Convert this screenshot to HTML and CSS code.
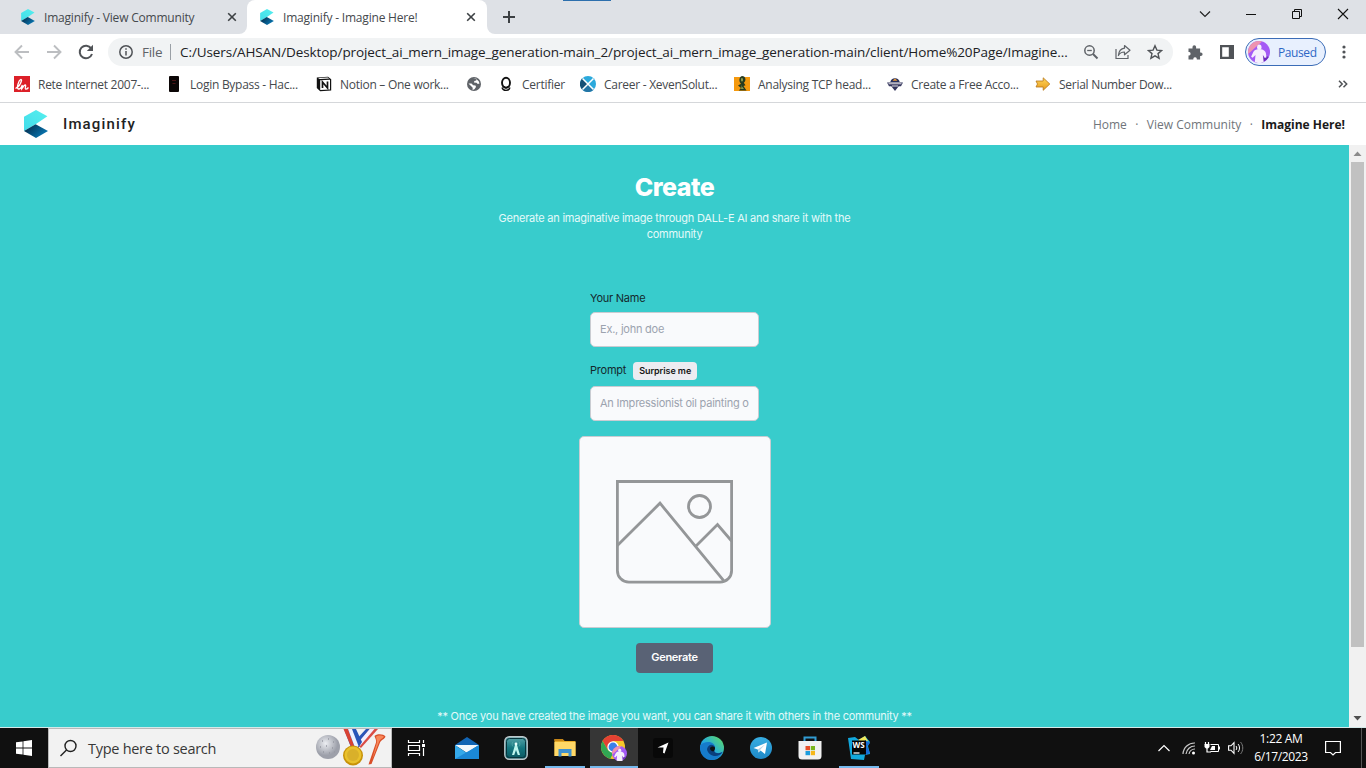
FILE: index.html
```html
<!DOCTYPE html>
<html lang="en">
<head>
<meta charset="utf-8">
<title>Imaginify - Imagine Here!</title>
<link rel="stylesheet" href="styles.css">
</head>
<body>
<svg class="defs" width="0" height="0" aria-hidden="true">
  <defs>
    <linearGradient id="navy" x1="0" y1="0" x2="1" y2="0.6"><stop offset="0" stop-color="#04243f"/><stop offset="1" stop-color="#0878b4"/></linearGradient>
    <linearGradient id="aqua" x1="0" y1="1" x2="1" y2="0"><stop offset="0" stop-color="#42dcea"/><stop offset="1" stop-color="#55efee"/></linearGradient>
    <linearGradient id="gold" x1="0" y1="0" x2="0" y2="1"><stop offset="0" stop-color="#ffd75a"/><stop offset="1" stop-color="#e89a1c"/></linearGradient>
    <linearGradient id="edge" x1="0" y1="1" x2="1" y2="0"><stop offset="0" stop-color="#0c62bd"/><stop offset=".45" stop-color="#23a9e0"/><stop offset="1" stop-color="#63e05c"/></linearGradient>
    <linearGradient id="tele" x1="0" y1="0" x2="0" y2="1"><stop offset="0" stop-color="#37aee2"/><stop offset="1" stop-color="#1e88c7"/></linearGradient>
    <linearGradient id="teal" x1="0" y1="0" x2="0" y2="1"><stop offset="0" stop-color="#5aa5aa"/><stop offset=".5" stop-color="#14767f"/><stop offset="1" stop-color="#0a555f"/></linearGradient>
    <radialGradient id="ball" cx=".4" cy=".35"><stop offset="0" stop-color="#eceef2"/><stop offset="1" stop-color="#9da0aa"/></radialGradient>
    <symbol id="logo" viewBox="0 0 24 28"><path fill="url(#aqua)" d="M12 0l11.4 6.2L12 14 0 21V6.8z"/><path fill="url(#navy)" d="M0 21l11.600-6.800L24 21l-12 7z"/></symbol>
    <symbol id="close" viewBox="0 0 10 10"><path d="M1.200 1.200l7.600 7.600M8.800 1.200L1.200 8.800" stroke="#3c4043" stroke-width="1.600"/></symbol>
    <symbol id="avatar" viewBox="0 0 22 22"><circle cx="11" cy="11" r="11" fill="#a45af5"/><path fill="#ee93b0" d="M11 0A11 11 0 0 0 .2 13L14 .4A11 11 0 0 0 11 0z"/><path fill="#6d2cba" d="M14.500 21.400A11 11 0 0 0 20.800 16l-5.300-2z"/><ellipse cx="11.300" cy="6.200" rx="2.200" ry="2.700" fill="#f7f0fd"/><path fill="#f5effd" d="M9.500 8.200h3.700c2.600.6 4.300 2 4.700 4l.6 4.100-1.700.7-2-3.200.9 7.300a11 11 0 0 1-8.900 0l.7-7-2.900 2.600-1.500-1 2-4.200c.8-1.900 2.200-2.900 4.400-3.300z"/></symbol>
  </defs>
</svg>

<div class="screen">
  <div class="tabstrip">
    <div class="tab tab-idle">
      <svg class="fav"><use href="#logo"/></svg><span class="tab-title">Imaginify - View Community</span><svg class="tab-x"><use href="#close"/></svg>
    </div>
    <div class="tab-slot">
      <div class="tab tab-active">
        <svg class="fav"><use href="#logo"/></svg><span class="tab-title">Imaginify - Imagine Here!</span><svg class="tab-x"><use href="#close"/></svg>
      </div>
    </div>
    <div class="strip-rest">
      <svg class="newtab" viewBox="0 0 12 12"><path d="M6 0v12M0 6h12" stroke="#3c4043" stroke-width="2"/></svg>
      <div class="loadmark"></div>
      <div class="window-buttons">
        <svg viewBox="0 0 12 12"><path d="M1 3.500l5 5 5-5" fill="none" stroke="#222" stroke-width="1.200"/></svg>
        <svg viewBox="0 0 12 12"><path d="M1 6.500h10" stroke="#111"/></svg>
        <svg viewBox="0 0 12 12"><path d="M1.500 3.500h7v7h-7zM3.500 3.500v-2h7v7h-2" fill="none" stroke="#111"/></svg>
        <svg viewBox="0 0 12 12"><path d="M1 1l10 10M11 1L1 11" stroke="#111" stroke-width="1.100"/></svg>
      </div>
    </div>
  </div>

  <div class="toolbar">
    <div class="nav-buttons">
      <svg viewBox="0 0 16 16"><path d="M15 8H2M8 1.500L1.500 8 8 14.500" fill="none" stroke="#bcbec1" stroke-width="1.900"/></svg>
      <svg viewBox="0 0 16 16"><path d="M1 8h13M8 1.500L14.500 8 8 14.500" fill="none" stroke="#bcbec1" stroke-width="1.900"/></svg>
      <svg viewBox="0 0 16 16"><path d="M13.200 4.300A6.300 6.300 0 1 0 14 10" fill="none" stroke="#505357" stroke-width="2"/><path d="M15 .8V7H8.800z" fill="#505357"/></svg>
    </div>
    <div class="omnibox">
      <svg class="info" viewBox="0 0 14 14"><circle cx="7" cy="7" r="6.200" fill="none" stroke="#505357" stroke-width="1.500"/><path d="M7 6v4.500M7 3.300v1.500" stroke="#505357" stroke-width="1.500"/></svg>
      <span class="scheme">File</span><span class="bar"></span>
      <span class="url">C:/Users/AHSAN/Desktop/project_ai_mern_image_generation-main_2/project_ai_mern_image_generation-main/client/Home%20Page/Imagine...</span>
      <div class="omni-icons">
        <svg viewBox="0 0 16 16"><circle cx="6.500" cy="6.500" r="4.700" fill="none" stroke="#5f6368" stroke-width="1.500"/><path d="M10 10l4.500 4.500" stroke="#5f6368" stroke-width="1.900"/><path d="M4.200 6.500h4.600" stroke="#5f6368" stroke-width="1.300"/></svg>
        <svg viewBox="0 0 16 16"><path d="M1 5v9.500h12V11" fill="none" stroke="#5f6368" stroke-width="1.200"/><path d="M9.500 1.500L15 6.200l-5.500 4.600V8C6.500 8 4.600 9.200 3.400 11.500 3.800 7.500 5.700 4.700 9.500 4.200z" fill="none" stroke="#5f6368" stroke-width="1.200" stroke-linejoin="round"/></svg>
        <svg viewBox="0 0 16 16"><path d="M8 1.800l1.900 4.300 4.700.4L11 9.600l1.100 4.600L8 11.800l-4.100 2.400L5 9.600 1.400 6.500l4.700-.4z" fill="none" stroke="#505357" stroke-width="1.400"/></svg>
      </div>
    </div>
    <svg class="ext" viewBox="0 0 16 16"><path fill="#5f6368" d="M1.500 4.500h4V3a1.800 1.800 0 0 1 3.600 0v1.500h4v4h.7a1.800 1.800 0 0 1 0 3.600h-.7v3.400H9.800v-.8a1.800 1.800 0 0 0-3.500 0v.8H1.500v-3.900h.7a1.800 1.800 0 0 0 0-3.500h-.7z"/></svg>
    <svg class="side" viewBox="0 0 14 14"><path fill="#505357" fill-rule="evenodd" d="M0 0h14v14H0zM2.200 2.200v9.600h6.600V2.200z"/></svg>
    <div class="profile"><svg><use href="#avatar"/></svg><span>Paused</span></div>
    <svg class="kebab" viewBox="0 0 4 14"><g fill="#505357"><circle cx="2" cy="2" r="1.600"/><circle cx="2" cy="7" r="1.600"/><circle cx="2" cy="12" r="1.600"/></g></svg>
  </div>

  <div class="bookmarks">
    <div class="bm"><svg viewBox="0 0 16 16"><path fill="#dc2028" d="M0 0h16v16H0z"/><path d="M1.500 12.500C5 10.500 7 7 7.500 4.500c.2-1.700-1.600-1-2.300.5C3.700 8.500 2.500 12.500 4.500 13c1.800.2 3-1.700 3.800-4-.1 1.500-.8 3-.6 4C9 10.800 10 9 11.300 9c1.200.3-.8 3.200.2 4 .8.400 2-.4 3-1.500" fill="none" stroke="#fff" stroke-width="1.300"/></svg><span>Rete Internet 2007-...</span></div>
    <div class="bm"><svg viewBox="0 0 16 16"><rect x="3" width="10" height="16" rx="1" fill="#0b0606"/><path d="M6 4.500h4M6.500 7.500h3" stroke="#4d1416" stroke-width="1.200"/></svg><span>Login Bypass - Hac...</span></div>
    <div class="bm"><svg viewBox="0 0 16 16"><path d="M.8 1.400L12 .7l3.200 2.500v11.300l-11 .8L.8 12z" fill="#111"/><path fill="#fff" d="M4.200 4.300l9.800-.6v9.700l-9.800.6zM2 1.900l9.600-.5 1.600 1.200-9.400.5z"/><path d="M6.500 12V6l5 6V5.600" fill="none" stroke="#111" stroke-width="1.700"/></svg><span>Notion – One work...</span></div>
    <div class="bm"><svg viewBox="0 0 16 16"><circle cx="8" cy="8" r="7" fill="#5f6368"/><path fill="#fff" d="M2.500 7.500l3 .1 1.700 1.600 2.300.2.500 1.500-1.600 2.400-1.800.7.100-2.300L5 10zM7 2.300l3.500.4-.2 1.800-2 .6-.3 1.500 2.500.2 1.300 1.200 1.700-.4-.8-2.400-2.200-2z"/></svg></div>
    <div class="bm"><svg viewBox="0 0 16 16"><ellipse cx="8" cy="6.800" rx="4" ry="5" fill="none" stroke="#111" stroke-width="1.900"/><path d="M4 11.500c1 3.800 7 3.800 8 0M6 10.500l2 1.500 2-1.500" fill="none" stroke="#111" stroke-width="1.300"/></svg><span>Certifier</span></div>
    <div class="bm"><svg viewBox="0 0 16 16"><circle cx="8" cy="8" r="8" fill="#2ba9dc"/><path d="M8 8L2.300 2.300a8 8 0 0 0 0 11.400z" fill="#164f75"/><path d="M8 8l-5.700 5.700a8 8 0 0 0 11.400 0z" fill="#2475a5"/><path d="M2.500 2.500l11 11M13.500 2.500l-11 11" stroke="#fff" stroke-width="1.500"/></svg><span>Career - XevenSolut...</span></div>
    <div class="bm"><svg viewBox="0 0 16 16"><path fill="#f5990d" d="M0 1h16v14H0z"/><path d="M8 0c4 0 4.500 5 1.800 6.700l1.700 2.600-2 .7 3 4.500H4.800L7 12 4 9.500l3-1.800C4.500 5.500 5 1 8 0z" fill="#263b20"/><path d="M7.500 2c1.500-.5 2.500 2.500.5 3.700C6.800 5 6.500 3 7.500 2zM8 8.500v2l2 2.500H7z" fill="#8a9a52"/></svg><span>Analysing TCP head...</span></div>
    <div class="bm"><svg viewBox="0 0 16 16"><path d="M0 6.500h16l-2 3.800h-2.300L8 15l-3.700-4.700H2z" fill="#34365d"/><path d="M3.300 6a4.800 4.800 0 0 1 9.400 0z" fill="#27305e"/><path d="M5.500 4.800L8 2.600l2.500 2.200z" fill="#ee9b35"/><path d="M1.500 7.700h13M5 10h6" stroke="#dddce4" stroke-width="1.100"/></svg><span>Create a Free Acco...</span></div>
    <div class="bm"><svg viewBox="0 0 16 16"><path d="M1 5h7.200V1.800L14.800 8l-6.600 6.300V11H1l1.500-3z" fill="url(#gold)" stroke="#b57516" stroke-width=".8"/></svg><span>Serial Number Dow...</span></div>
    <svg class="more" viewBox="0 0 10 8"><path d="M1 .8L4.200 4 1 7.200M5.500.8L8.700 4 5.500 7.200" fill="none" stroke="#505357" stroke-width="1.500"/></svg>
  </div>

  <header class="site-header">
    <svg class="site-logo"><use href="#logo"/></svg>
    <span class="brand">Imaginify</span>
    <nav><a>Home</a><i>·</i><a>View Community</a><i>·</i><a class="current">Imagine Here!</a></nav>
  </header>

  <div class="viewport">
    <main class="page">
      <h1>Create</h1>
      <p class="lead">Generate an imaginative image through DALL-E AI and share it with the community</p>
      <form class="form">
        <label class="label-name">Your Name</label>
        <input type="text" placeholder="Ex., john doe">
        <div class="prompt-row"><label>Prompt</label><button type="button" class="surprise">Surprise me</button></div>
        <input type="text" placeholder="An Impressionist oil painting o">
      </form>
      <div class="preview">
        <svg viewBox="0 0 117 104"><g fill="none" stroke="#949698" stroke-width="2.800"><path d="M1.400 1.500h114.200v89.200a11.500 11.500 0 0 1-11.500 11.500H12.900A11.500 11.500 0 0 1 1.400 90.700z"/><path d="M1.400 65.500L44 23.200l64.500 78.500M80 66l21.500-21.500L115.600 61"/><circle cx="83.500" cy="26.500" r="11"/></g></svg>
      </div>
      <button type="button" class="generate">Generate</button>
      <p class="note">** Once you have created the image you want, you can share it with others in the community **</p>
    </main>
    <div class="scrollbar">
      <svg viewBox="0 0 17 17"><path d="M4.500 11l4-4.500 4 4.500z" fill="#8b8b8b"/></svg>
      <div class="thumb"></div>
      <svg class="down" viewBox="0 0 17 17"><path d="M4.500 6l4 4.500 4-4.500z" fill="#505050"/></svg>
    </div>
  </div>

  <div class="taskbar">
    <div class="start"><svg viewBox="0 0 16 16"><path fill="#fff" d="M0 2.300l6.600-.9v6.200H0zM7.400 1.200L16 0v7.600H7.400zM0 8.400h6.600v6.200L0 13.700zM7.400 8.400H16V16l-8.600-1.200z"/></svg></div>
    <div class="search">
      <svg class="lens" viewBox="0 0 18 18"><circle cx="10.500" cy="7" r="5.500" fill="none" stroke="#222" stroke-width="1.400"/><path d="M6.500 11L.5 17" stroke="#222" stroke-width="1.500"/></svg>
      <span>Type here to search</span>
      <svg class="sports" viewBox="0 0 74 38">
        <circle cx="14" cy="18" r="12" fill="url(#ball)"/>
        <path d="M8 12h1m5-2h1m4 3h1M6 18h1m5-1h1m5 2h1M9 23h1m5 1h1m4-1h1" stroke="#9699a3" stroke-width="1.300"/>
        <path d="M53 0h11L47 19l-5-4z" fill="#d94d45"/><path d="M55.500 0h5L46 17l-3-3z" fill="#f2efff"/><path d="M52 0h3.500L43 15l-2-3z" fill="#2a55b8"/>
        <path d="M30 0h12l6 13-5 8h-5z" fill="#2855b8"/><path d="M29.500 0h4.500l7 19-3 1z" fill="#d94334"/><path d="M34 0h4l6.500 17-3 3z" fill="#edf1ff"/>
        <circle cx="39" cy="26.500" r="10" fill="#c79209"/><circle cx="39" cy="26" r="8.500" fill="#e9c12c"/><circle cx="39" cy="26" r="6" fill="#d9b02a"/>
        <path d="M60.500 7c2-2.500 9-2.500 11 .5-1 3-4 3-5.500 6L57.500 35l-3 .5 7.500-22c.5-3-1-4.500-1.500-6.500z" fill="#d94f29"/><path d="M62 7.500c2-1.500 6-1.500 8 0-1.500 2.500-4 2.500-5 5.500L58 31l5-18z" fill="#f8875a"/>
      </svg>
    </div>
    <div class="apps">
      <div class="app"><svg class="taskview" viewBox="0 0 24 24"><path d="M4.500 4v2.500h11V4M4.500 20v-2.500h11V20M4.500 9.500h11v5h-11zM19.500 4v3M19.500 12V20" fill="none" stroke="#fff" stroke-width="1.200"/><path d="M18 8h3v3h-3z" fill="#fff"/></svg></div>
      <div class="app"><svg viewBox="0 0 24 24"><path d="M0 9L12 1l12 8v2H0z" fill="#1265b4"/><path d="M0 9h24L12 17z" fill="#f3f8fc"/><path d="M0 9l12 8 12-8v14H0z" fill="#35a9ea"/><path d="M0 23L24 9v14z" fill="#1b88d6"/></svg></div>
      <div class="app"><svg viewBox="0 0 24 24"><rect x=".8" y=".8" width="22.400" height="22.400" rx="4.500" fill="url(#teal)" stroke="#bfc7cb" stroke-width="1.400"/><rect x="2.500" y="2.500" width="19" height="19" rx="3" fill="none" stroke="#06343c"/><path d="M11.300 8L8 19h2.200L12 14l1.800 5H16L12.700 8z" fill="#bcf5ee"/><circle cx="12" cy="8" r="1.400" fill="#e7fffb"/><path d="M9 5.800c-1.200 1.400-1.200 3.200 0 4.600M15 5.800c1.200 1.400 1.200 3.200 0 4.600" fill="none" stroke="#4fa9a9" stroke-width=".8"/></svg></div>
      <div class="app open"><svg viewBox="0 0 24 24"><path d="M1.500 3h8l2 2h11v15h-21z" fill="#e8ac27"/><path d="M1.500 6h21v14h-21z" fill="#ffd867"/><path d="M1.500 3h8l2 2h-10z" fill="#c78618"/><path d="M5.500 13h13v7.500h-3V17h-7v3.500h-3z" fill="#3e91cf"/></svg></div>
      <div class="app open active"><svg class="chrome" viewBox="0 0 26 26"><circle cx="12" cy="12" r="12" fill="#f6c72a"/><path d="M1.600 6A12 12 0 0 1 22.400 6H12l-5.200 9z" fill="#e44133"/><path d="M1.600 6L6.800 15l5.500 3-3 5.700A12 12 0 0 1 1.600 6z" fill="#31a653"/><circle cx="12" cy="12" r="5.700" fill="#fff"/><circle cx="12" cy="12" r="4.400" fill="#3b80ea"/><use href="#avatar" x="11" y="11" width="15" height="15"/></svg></div>
      <div class="app"><svg class="small" viewBox="0 0 20 20"><rect width="20" height="20" rx="3" fill="#080808"/><path d="M4.500 9.500L15.500 4.500l-4 11-1.500-.8.500-5.200z" fill="#fff"/></svg></div>
      <div class="app"><svg viewBox="0 0 24 24"><circle cx="12" cy="12" r="12" fill="url(#edge)"/><path d="M0 10C3 5 14 4 15 11c.3 2-1 2.500-.8 4 .5 2.500 5.800 3 8.800.5C20 23 12 26 6 22.500 2 20 0 15 0 10z" fill="#167bcb"/><path d="M7 13c1-4 5-6 8-2 .3 2-1 2.500-.8 4 .5 2.500 5.800 3 8.300.8-3 5.200-9 5.200-12.500 2.500C8 16.500 7 14.500 7 13z" fill="#0a3f7d"/><path d="M10 12c2-2.500 5-1.500 5 .3s-1 1.500-.8 3c-2 .3-4.200-.8-4.200-3.300z" fill="#101010"/></svg></div>
      <div class="app"><svg viewBox="0 0 24 24"><circle cx="12" cy="12" r="11" fill="url(#tele)"/><path d="M4.500 12L18 6.500l-2 11.500-4.500-3.500-2 2-.7-3z" fill="#fff"/><path d="M8.800 13.500L16 8.500l-5 5.500-1.500 2.500z" fill="#b6d5e8"/></svg></div>
      <div class="app"><svg viewBox="0 0 24 24"><path d="M6.500 6V1.500h11V6" fill="none" stroke="#319bd2" stroke-width="2"/><path d="M.5 5h23v15a3.500 3.500 0 0 1-3.500 3.500H4A3.500 3.500 0 0 1 .5 20z" fill="#f1f1f1"/><path d="M7.500 10H12v4.200H7.500z" fill="#e74e27"/><path d="M12.800 10h4.200v4.200h-4.200z" fill="#79b51c"/><path d="M7.500 15H12v4.200H7.500z" fill="#1c9ddd"/><path d="M12.800 15h4.200v4.200h-4.200z" fill="#f7b719"/></svg></div>
      <div class="app open"><svg viewBox="0 0 24 24"><path d="M1 2l7-1 4 3 6-4 5 6-2 4 2 8-5 1-1 5-13-1z" fill="#12a8dd"/><path d="M11 4l7-4 3 5-4 2z" fill="#f0e75a"/><path d="M18 4l5 3-3 3 3 7-5 2z" fill="#176bd7"/><path d="M5 4.500h14v14H5z" fill="#050505"/><path d="M6.500 17h6" stroke="#fff" stroke-width="1.300"/><text x="5.600" y="12" class="ws">WS</text></svg></div>
    </div>
    <div class="tray">
      <svg class="chev" viewBox="0 0 14 14"><path d="M1.500 10L7 4.500l5.500 5.500" fill="none" stroke="#fff" stroke-width="1.200"/></svg>
      <svg class="wifi" viewBox="0 0 14 14"><g fill="none" stroke="#c9c9c9" stroke-width="1.200"><path d="M1 13A11.500 11.500 0 0 1 13 2M4 13A9 9 0 0 1 13 5M7 13a6 6 0 0 1 6-5"/></g><circle cx="11.500" cy="12" r="1.500" fill="#fff"/></svg>
      <svg class="batt" viewBox="0 0 16 14"><path d="M6.500 3.500h8v7h-8M15.500 5.500v3" fill="none" stroke="#fff"/><path d="M8 5h3v4H6zM.5 3h5v3L4 7.500H2L.5 6z" fill="#fff"/><path d="M1.500 1v3M4.500 1v3M3 7v4h4" fill="none" stroke="#fff" stroke-width="1.200"/></svg>
      <svg class="vol" viewBox="0 0 16 14"><path d="M.6 4.800H3l3-3.200v10.800L3 9.200H.6z" fill="none" stroke="#fff" stroke-width="1.100"/><path d="M8 5c1 1.200 1 2.800 0 4M10 3c2 2.200 2 5.800 0 8" fill="none" stroke="#fff"/><path d="M12.500 1c3 3.200 3 8.800 0 12" fill="none" stroke="#7b7b7b"/></svg>
      <div class="clock"><span>1:22 AM</span><span>6/17/2023</span></div>
      <svg class="notice" viewBox="0 0 16 16"><path d="M.6 1.500h14.800v11H10.500L8 15l-2.500-2.500H.6z" fill="none" stroke="#fff" stroke-width="1.200"/></svg>
      <div class="desk"></div>
    </div>
  </div>
</div>
</body>
</html>
```
FILE: styles.css
```css
* { box-sizing: border-box; }
body { margin: 0; overflow: hidden; font-family: "Open Sans", "Noto Sans", sans-serif; }
svg { display: block; flex: none; }
.defs { position: absolute; }
.screen { width: 1366px; height: 768px; display: flex; flex-direction: column; background: #fff; }
span { white-space: nowrap; }

/* Tab strip */
.tabstrip { height: 34px; background: #fff; display: flex; flex: none; }
.tab { height: 34px; display: flex; align-items: center; color: #45494d; font-size: 12px; }
.tab-idle { width: 247px; padding-left: 21px; background: #dee1e6; border-radius: 0 0 8px 0; }
.tab-slot { width: 240px; background: linear-gradient(#dee1e6, #dee1e6) top / 100% 10px no-repeat; }
.tab-active { padding-left: 13px; background: #fff; border-radius: 8px 8px 0 0; }
.strip-rest { flex: 1; height: 34px; display: flex; background: #dee1e6; border-radius: 0 0 0 8px; }
.fav { width: 14px; height: 16px; }
.tab-title { margin-left: 9px; width: 183px; letter-spacing: -0.2px; }
.tab-x { width: 10px; height: 10px; }
.newtab { width: 12px; height: 12px; margin: 11px 0 0 16px; }
.loadmark { width: 48px; height: 1px; background: #2c6fad; margin-left: 48px; }
.window-buttons { margin-left: auto; display: flex; gap: 34px; padding: 8px 17px 0 0; }
.window-buttons svg { width: 12px; height: 12px; }

/* Toolbar */
.toolbar { height: 36px; display: flex; flex: none; align-items: center; }
.nav-buttons { display: flex; gap: 16px; padding-left: 14px; width: 108px; }
.nav-buttons svg { width: 16px; height: 16px; }
.omnibox { width: 1065px; height: 28px; border-radius: 14px; background: #f1f3f4; display: flex; align-items: center; padding-left: 11px; font-size: 14px; }
.info { width: 14px; height: 14px; }
.scheme { color: #5f6368; margin-left: 9px; width: 28px; font-size: 13.5px; letter-spacing: -0.3px; }
.bar { width: 1px; height: 16px; background: #9aa0a6; }
.url { color: #202124; margin-left: 9px; width: 903px; font-size: 13.5px; letter-spacing: -0.085px; }
.omni-icons { display: flex; gap: 16px; }
.omni-icons svg { width: 16px; height: 16px; }
.ext { width: 16px; height: 16px; margin-left: 14px; }
.side { width: 14px; height: 14px; margin-left: 17px; }
.profile { width: 81px; height: 28px; margin-left: 11px; border: 1px solid #3b6cb7; border-radius: 14px; background: #e8f0fe; color: #2e67c5; display: flex; align-items: center; padding-left: 2px; font-size: 12px; letter-spacing: -0.4px; }
.profile svg { width: 22px; height: 22px; margin-right: 8px; }
.kebab { width: 4px; height: 14px; margin-left: 16px; }

/* Bookmarks */
.bookmarks { height: 33px; flex: none; padding: 6px 0 0 14px; display: grid; grid-template-columns: 152px 150px 150px 32px 82px 154px 153px 148px 303px auto; align-items: start; border-bottom: 1px solid #d5d7da; color: #45494d; font-size: 12px; }
.bm { display: flex; gap: 8px; align-items: center; height: 16px; }
.bm svg { width: 16px; height: 16px; }
.bm span { letter-spacing: -0.27px; }
.more { width: 10px; height: 8px; margin-top: 4px; }

/* Site header */
.site-header { height: 42px; flex: none; display: flex; align-items: center; padding: 0 21px 0 24px; }
.site-logo { width: 24px; height: 28px; }
.brand { font: 500 15px/20px Roboto, sans-serif; letter-spacing: 1.15px; color: #222; margin-left: 15px; }
nav { margin-left: auto; display: flex; align-items: center; font-size: 12px; color: #70757a; }
nav i { width: 20px; text-align: center; font-style: normal; }
.current { color: #1b1b1b; font-weight: 700; }

/* Page */
.viewport { height: 582px; flex: none; display: flex; }
.page { width: 1349px; background: #38cccc; display: flex; flex-direction: column; align-items: center; font-family: Inter, sans-serif; font-size: 11px; letter-spacing: -0.23px; overflow: hidden; }
h1 { margin: 27px 0 0; font-size: 25px; line-height: 30px; font-weight: 800; color: #fff; letter-spacing: -0.5px; }
.lead { margin: 8px 0 0; width: 360px; line-height: 16px; text-align: center; color: #e4fafa; }
.form { width: 169px; margin-top: 48px; display: flex; flex-direction: column; color: #14292d; }
.form label { line-height: 16px; }
.label-name { margin-bottom: 6px; }
.form input { width: 169px; height: 35px; border: 1px solid #c9ccd2; border-radius: 5px; background: #f9fafc; padding: 0 9px 2px; font: 11px Inter, sans-serif; letter-spacing: -0.23px; color: #222; }
.form input::placeholder { color: #9ca3af; opacity: 1; }
.prompt-row { display: flex; align-items: center; gap: 7px; height: 18px; margin: 15px 0 6px; }
.prompt-row label { padding-bottom: 2px; }
.surprise { width: 64px; height: 18px; padding: 0 0 1px; border: 0; border-radius: 4px; background: #ececf1; font: 600 9px Inter, sans-serif; letter-spacing: -0.05px; color: #161616; white-space: nowrap; }
.preview { width: 192px; height: 192px; flex: none; margin-top: 15px; border: 1px solid #c9ccd2; border-radius: 5px; background: #f9fafc; display: flex; align-items: center; justify-content: center; }
.preview svg { width: 117px; height: 104px; }
.generate { width: 77px; height: 30px; flex: none; margin-top: 15px; padding: 0 0 2px; border: 0; border-radius: 4px; background: #596275; color: #fff; font: 600 11px Inter, sans-serif; letter-spacing: -0.3px; }
.note { margin: 35px 0 0; line-height: 16px; color: #e4fafa; white-space: nowrap; }
.scrollbar { width: 17px; background: #f1f1f1; display: flex; flex-direction: column; align-items: center; }
.scrollbar svg { width: 17px; height: 17px; }
.thumb { width: 13px; height: 485px; background: #c1c1c1; }
.down { margin-top: auto; }

/* Taskbar */
.taskbar { height: 41px; flex: none; border-top: 1px solid #d5e9e9; background: #101010; display: flex; color: #fff; }
.start { width: 48px; display: flex; align-items: center; justify-content: center; }
.start svg { width: 16px; height: 16px; }
.search { width: 344px; border: 1px solid #b9b9b9; background: #f2f2f2; color: #383838; display: flex; align-items: center; padding-left: 11px; font-size: 14.5px; overflow: hidden; }
.lens { width: 18px; height: 18px; }
.search span { margin-left: 10px; width: 226px; letter-spacing: -0.28px; }
.sports { width: 74px; height: 38px; }
.apps { display: flex; padding-left: 1px; }
.app { width: 49px; display: flex; align-items: center; justify-content: center; }
.app svg { width: 24px; height: 24px; }
.app .taskview { margin-right: 3px; }
.app .small { width: 20px; height: 20px; }
.app .chrome { width: 26px; height: 26px; }
.open { background: linear-gradient(#76b9ed, #76b9ed) center bottom / 40px 2px no-repeat; }
.active { background: linear-gradient(#76b9ed, #76b9ed) center bottom / 48px 2px no-repeat, linear-gradient(#363636, #363636) center / 48px 100% no-repeat; }
.ws { font: 700 8px "Open Sans", sans-serif; fill: #fff; }
.tray { margin-left: auto; display: flex; align-items: center; }
.chev { width: 14px; height: 14px; }
.wifi { width: 14px; height: 14px; margin-left: 11px; }
.batt { width: 16px; height: 14px; margin-left: 8px; }
.vol { width: 16px; height: 14px; margin-left: 8px; }
.clock { width: 74px; display: flex; flex-direction: column; align-items: center; font-size: 12px; line-height: 18px; letter-spacing: -0.35px; }
.notice { width: 16px; height: 16px; margin-left: 7px; }
.desk { width: 5px; height: 40px; border-left: 1px solid #555; margin-left: 20px; }
```
